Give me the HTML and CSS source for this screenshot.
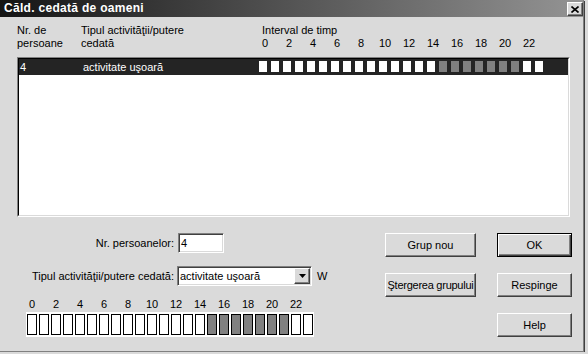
FILE: index.html
```html
<!DOCTYPE html>
<html lang="ro">
<head>
    <meta charset="UTF-8">
    <title>Căld. cedată de oameni</title>
    <link rel="stylesheet" href="styles.css">
</head>
<body>
    <div class="window">
        <div class="titlebar">
            <span class="title">Căld. cedată de oameni</span>
            <button class="close">
                <svg width="8" height="7" viewBox="0 0 8 7"><path d="M0.5 0.5 L7.5 6.5 M7.5 0.5 L0.5 6.5" stroke="#000" stroke-width="1.6" fill="none"/></svg>
            </button>
        </div>
        <div class="content">
            <div class="list-head">
                <div class="head-nr">Nr. de<br>persoane</div>
                <div class="head-type">Tipul activităţii/putere<br>cedată</div>
                <div class="head-time">
                    <div class="caption">Interval de timp</div>
                    <div class="hours">
                        <span>0</span><span>2</span><span>4</span><span>6</span><span>8</span><span>10</span>
                        <span>12</span><span>14</span><span>16</span><span>18</span><span>20</span><span>22</span>
                    </div>
                </div>
            </div>

            <div class="listbox">
                <div class="listbox-inner">
                    <div class="row selected">
                        <span class="cell-nr">4</span>
                        <span class="cell-type">activitate uşoară</span>
                        <div class="slots" id="rowSlots"></div>
                    </div>
                </div>
            </div>

            <div class="bottom">
                <div class="form">
                    <div class="field">
                        <label>Nr. persoanelor:</label>
                        <div class="input">4</div>
                    </div>
                    <div class="field field-type">
                        <label>Tipul activităţii/putere cedată:</label>
                        <div class="combo">
                            <span class="combo-text">activitate uşoară</span>
                            <span class="combo-btn">
                                <svg width="7" height="4" viewBox="0 0 7 4"><path d="M0 0 H7 L3.5 4 Z" fill="#000"/></svg>
                            </span>
                        </div>
                        <span class="unit">W</span>
                    </div>
                    <div class="hours hours-bottom">
                        <span>0</span><span>2</span><span>4</span><span>6</span><span>8</span><span>10</span>
                        <span>12</span><span>14</span><span>16</span><span>18</span><span>20</span><span>22</span>
                    </div>
                    <div class="strip" id="strip"></div>
                </div>

                <div class="buttons">
                    <button class="btn">Grup nou</button>
                    <button class="btn default">OK</button>
                    <button class="btn narrow">Ştergerea grupului</button>
                    <button class="btn">Respinge</button>
                    <button class="btn help">Help</button>
                </div>
            </div>
        </div>
    </div>

    <script>
        // ore 15..21 active
        const active = h => h >= 15 && h <= 21;
        const rowSlots = document.getElementById('rowSlots');
        const strip = document.getElementById('strip');
        for (let h = 0; h < 24; h++) {
            const s = document.createElement('span');
            s.className = 'slot' + (active(h) ? ' on' : '');
            rowSlots.appendChild(s);
            const b = document.createElement('span');
            b.className = 'box' + (active(h) ? ' on' : '');
            strip.appendChild(b);
        }
    </script>
</body>
</html>
```

FILE: styles.css
```css
body {
    margin: 0;
    background: #dadada;
    font-family: "Liberation Sans", Arial, sans-serif;
    font-size: 11px;
    color: #000;
}

.window {
    width: 583px;
    height: 351px;
    background: #dadada;
    border-right: 1px solid #808080;
    border-bottom: 1px solid #808080;
    box-shadow: 1px 1px 0 #404040;
}

.titlebar {
    height: 17px;
    display: flex;
    justify-content: space-between;
    padding-left: 4px;
    background: linear-gradient(to right, #141414, #949494);
    color: #fff;
}

.title {
    font-weight: bold;
    font-size: 12px;
    line-height: 17px;
    letter-spacing: 0.3px;
}

.close {
    width: 16px;
    height: 14px;
    margin-top: 2px;
    padding: 0;
    background: #dadada;
    border: 1px solid;
    border-color: #fff #404040 #404040 #fff;
    box-shadow: inset -1px -1px #808080;
    display: flex;
    align-items: center;
    justify-content: center;
}

.content {
    padding: 7px 0 0 17px;
}

/* antet lista */
.list-head {
    display: flex;
    height: 33px;
    line-height: 13px;
}

.head-nr { width: 64px; }
.head-type { width: 178px; }
.head-time .caption { padding-left: 3px; }

.hours {
    display: flex;
}

.hours span {
    width: 12px;
    margin-right: 12px;
    display: flex;
    justify-content: center;
}

/* lista */
.listbox {
    width: 553px;
    height: 160px;
    box-sizing: border-box;
    border: 1px solid;
    border-color: #808080 #fff #fff #808080;
}

.listbox-inner {
    height: 100%;
    box-sizing: border-box;
    border: 1px solid;
    border-color: #000 #dadada #dadada #000;
    background: #fff;
}

.row {
    display: flex;
    height: 16px;
    line-height: 16px;
    padding-left: 1px;
}

.row.selected {
    background: #242424;
    color: #fff;
}

.cell-nr { width: 63px; }
.cell-type { width: 176px; }

.slots {
    display: flex;
    gap: 4px;
    margin-top: 2px;
    height: 11px;
}

.slot {
    width: 8px;
    height: 11px;
    background: #fff;
}

.slot.on { background: #808080; }

/* partea de jos */
.bottom {
    display: flex;
    margin-top: 16px;
}

.form {
    width: 368px;
}

.field {
    display: flex;
    align-items: center;
    height: 20px;
}

.field label {
    width: 160px;
    box-sizing: border-box;
    padding-right: 3px;
    text-align: right;
    white-space: nowrap;
}

.field-type {
    margin-top: 13px;
}

.input {
    width: 46px;
    height: 20px;
    margin-left: 1px;
    box-sizing: border-box;
    border: 1px solid;
    border-color: #808080 #fff #fff #808080;
    box-shadow: inset 1px 1px #404040, inset -1px -1px #dadada;
    background: #fff;
    padding-left: 2px;
    line-height: 18px;
}

.combo {
    width: 135px;
    height: 20px;
    box-sizing: border-box;
    border: 1px solid;
    border-color: #808080 #fff #fff #808080;
    box-shadow: inset 1px 1px #404040, inset -1px -1px #dadada;
    background: #fff;
    display: flex;
    align-items: center;
    justify-content: space-between;
    padding: 1px 1px 1px 2px;
}

.combo-btn {
    width: 16px;
    height: 16px;
    box-sizing: border-box;
    background: #dadada;
    border: 1px solid;
    border-color: #fff #404040 #404040 #fff;
    box-shadow: inset -1px -1px #808080;
    display: flex;
    align-items: center;
    justify-content: center;
}

.unit {
    margin-left: 5px;
}

.hours-bottom {
    margin: 12px 0 0 9px;
    line-height: 13px;
}

.strip {
    display: flex;
    gap: 2px;
    width: fit-content;
    margin: 1px 0 0 9px;
    padding: 2px 1px;
    background: #fff;
}

.box {
    width: 10px;
    height: 21px;
    box-sizing: border-box;
    border: 1px solid #000;
    background: #fff;
}

.box.on { background: #808080; }

.buttons {
    display: grid;
    grid-template-columns: 91px 75px;
    grid-auto-rows: 24px;
    column-gap: 21px;
    row-gap: 16px;
}

.btn {
    font: inherit;
    color: #000;
    padding: 0;
    white-space: nowrap;
    overflow: visible;
    background: #dadada;
    border: 1px solid;
    border-color: #fff #404040 #404040 #fff;
    box-shadow: inset -1px -1px #808080;
}

.btn.narrow {
    letter-spacing: -0.25px;
}

.btn.default {
    border-color: #000;
    box-shadow: inset 1px 1px #fff, inset -1px -1px #404040, inset -2px -2px #808080;
}

.btn.help {
    grid-column: 2;
}
```
